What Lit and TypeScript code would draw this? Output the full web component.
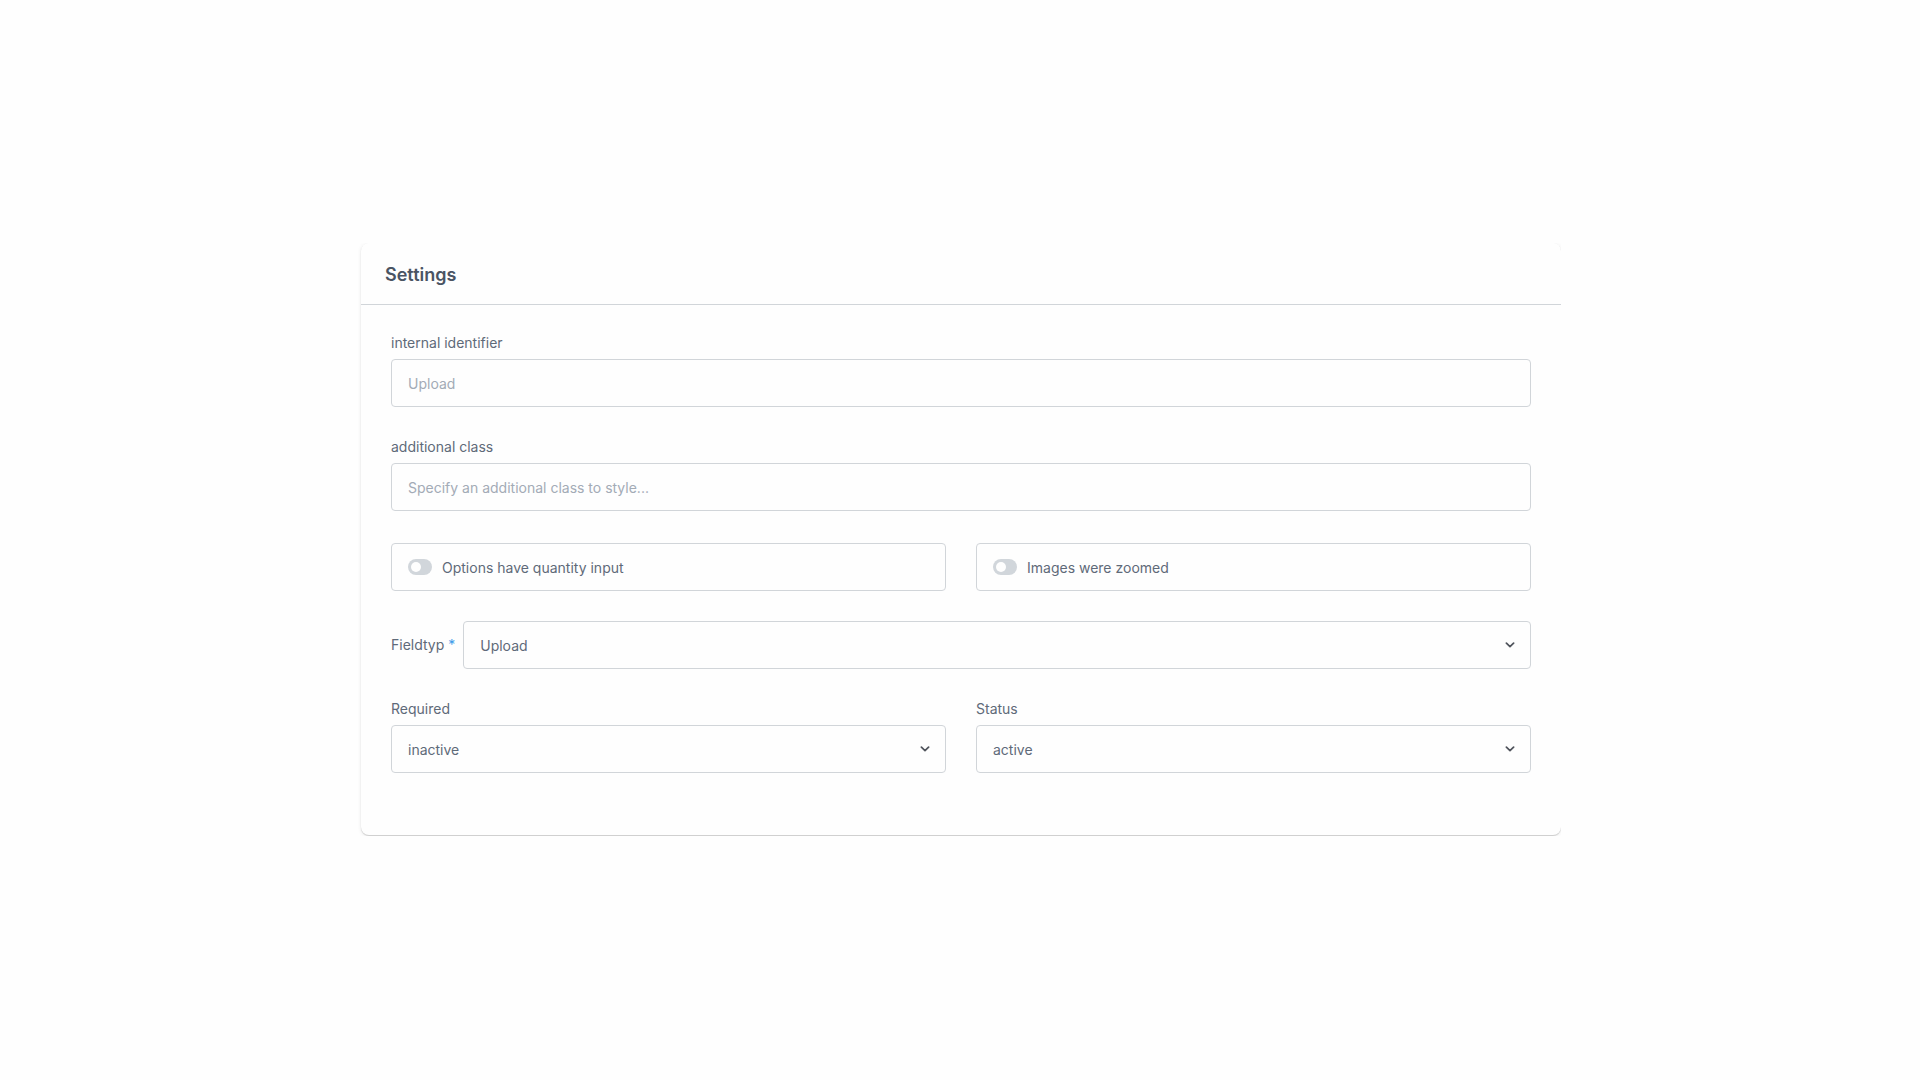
import { LitElement, html, css, type TemplateResult } from "lit";
import { customElement, property } from "lit/decorators.js";

@customElement("ui-text-field")
export class UiTextField extends LitElement {
  @property({ type: String })
  label = "";

  @property({ type: String })
  placeholder = "";

  static styles = css`
    :host {
      display: flex;
      flex-direction: column;
      gap: 8px;
    }

    .label {
      line-height: 16px;
    }

    .input {
      box-sizing: border-box;
      width: 100%;
      height: 48px;
      margin: 0;
      padding: 0 16px;
      border: 1px solid var(--color-border);
      border-radius: 4px;
      background: var(--color-surface);
      color: inherit;
      font: inherit;
    }

    .input::placeholder {
      color: var(--color-placeholder);
      opacity: 1;
    }
  `;

  render(): TemplateResult {
    return html`
      <label class="label" for="input">${this.label}</label>
      <input class="input" id="input" type="text" placeholder=${this.placeholder} />
    `;
  }
}

@customElement("ui-select-field")
export class UiSelectField extends LitElement {
  @property({ type: String })
  label = "";

  @property({ type: Array })
  options: string[] = [];

  @property({ type: Boolean })
  required = false;

  @property({ type: Boolean, reflect: true })
  inline = false;

  static styles = css`
    :host {
      display: flex;
      flex-direction: column;
      gap: 8px;
    }

    :host([inline]) {
      flex-direction: row;
      align-items: center;
    }

    .label {
      line-height: 16px;
      white-space: nowrap;
    }

    .mark {
      color: var(--color-accent);
    }

    .control {
      display: grid;
      flex: 1;
      align-items: center;
    }

    .select,
    .chevron {
      grid-area: 1 / 1;
    }

    .select {
      box-sizing: border-box;
      width: 100%;
      height: 48px;
      margin: 0;
      padding: 0 40px 0 16px;
      border: 1px solid var(--color-border);
      border-radius: 4px;
      background: var(--color-surface);
      color: inherit;
      font: inherit;
      appearance: none;
    }

    .chevron {
      justify-self: end;
      width: 10px;
      height: 6px;
      margin-right: 16px;
      fill: none;
      stroke: var(--color-icon);
      stroke-width: 1.7;
      stroke-linecap: round;
      stroke-linejoin: round;
      pointer-events: none;
    }
  `;

  render(): TemplateResult {
    return html`
      <label class="label" for="select"
        >${this.label}${this.required ? html` <span class="mark">*</span>` : ""}</label
      >
      <div class="control">
        <select class="select" id="select" ?required=${this.required}>
          ${this.options.map((option) => html`<option>${option}</option>`)}
        </select>
        <svg class="chevron" viewBox="0 0 10 6" aria-hidden="true">
          <path d="M1.4 1.2 5 4.7 8.6 1.2" />
        </svg>
      </div>
    `;
  }
}

@customElement("ui-switch-field")
export class UiSwitchField extends LitElement {
  @property({ type: String })
  label = "";

  static styles = css`
    :host {
      display: block;
    }

    .field {
      display: flex;
      align-items: center;
      gap: 10px;
      box-sizing: border-box;
      height: 48px;
      padding: 0 16px;
      border: 1px solid var(--color-border);
      border-radius: 4px;
      background: var(--color-surface);
    }

    .switch {
      display: flex;
      align-items: center;
      box-sizing: border-box;
      width: 24px;
      height: 16px;
      margin: 0;
      padding: 3px;
      border-radius: 8px;
      background: var(--color-track);
      appearance: none;
    }

    .switch::before {
      content: "";
      width: 10px;
      height: 10px;
      border-radius: 50%;
      background: var(--color-surface);
    }

    .switch:checked {
      justify-content: flex-end;
      background: var(--color-accent);
    }
  `;

  render(): TemplateResult {
    return html`
      <div class="field">
        <input class="switch" id="switch" type="checkbox" role="switch" />
        <label for="switch">${this.label}</label>
      </div>
    `;
  }
}

@customElement("app-root")
export class AppRoot extends LitElement {
  static styles = css`
    :host {
      --color-surface: #fefefe;
      --color-border: #d1d5d9;
      --color-text: #5f6a79;
      --color-heading: #4a5463;
      --color-placeholder: #a3abb6;
      --color-track: #d1d6db;
      --color-icon: #50545c;
      --color-accent: #3d9be9;

      display: flex;
      align-items: center;
      justify-content: center;
      box-sizing: border-box;
      min-height: 100vh;
      padding: 0 1px 1px 0;
      background: #fefefe;
      color: var(--color-text);
      font-family: Inter, "Liberation Sans", sans-serif;
      font-size: 14px;
    }

    /* Trims the card shadow on every side but the left and bottom */
    .frame {
      box-sizing: border-box;
      width: 100%;
      max-width: 1203px;
      padding: 0 0 1px 3px;
      overflow: hidden;
    }

    .card {
      border-radius: 8px;
      background: var(--color-surface);
      box-shadow:
        0 1px 1px rgb(0 0 0 / 16%),
        0 1px 4px rgb(0 0 0 / 8%);
    }

    .header {
      padding: 20px 24px 18px;
      border-bottom: 1px solid var(--color-border);
    }

    .title {
      margin: 0;
      color: var(--color-heading);
      font-size: 18px;
      font-weight: 600;
      line-height: 23px;
    }

    .body {
      display: flex;
      flex-direction: column;
      gap: 32px;
      padding: 30px 30px 62px;
    }

    .stack {
      display: grid;
      gap: 30px;
    }

    .row {
      display: grid;
      grid-template-columns: 1fr 1fr;
      gap: 30px;
    }
  `;

  render(): TemplateResult {
    return html`
      <main class="frame">
        <section class="card">
          <header class="header">
            <h1 class="title">Settings</h1>
          </header>
          <form class="body">
            <ui-text-field label="internal identifier" placeholder="Upload"></ui-text-field>
            <ui-text-field
              label="additional class"
              placeholder="Specify an additional class to style..."
            ></ui-text-field>
            <div class="stack">
              <div class="row">
                <ui-switch-field label="Options have quantity input"></ui-switch-field>
                <ui-switch-field label="Images were zoomed"></ui-switch-field>
              </div>
              <ui-select-field
                inline
                required
                label="Fieldtyp"
                .options=${["Upload"]}
              ></ui-select-field>
            </div>
            <div class="row">
              <ui-select-field label="Required" .options=${["inactive", "active"]}></ui-select-field>
              <ui-select-field label="Status" .options=${["active", "inactive"]}></ui-select-field>
            </div>
          </form>
        </section>
      </main>
    `;
  }
}

declare global {
  interface HTMLElementTagNameMap {
    "ui-text-field": UiTextField;
    "ui-select-field": UiSelectField;
    "ui-switch-field": UiSwitchField;
    "app-root": AppRoot;
  }
}
